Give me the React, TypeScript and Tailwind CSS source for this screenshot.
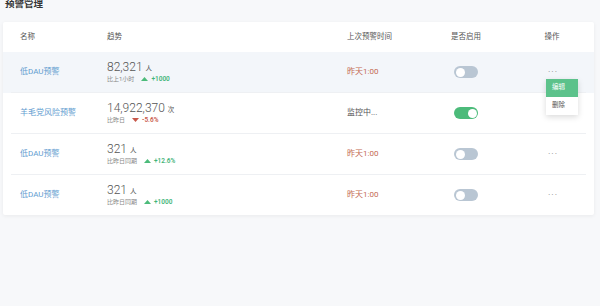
import { useState } from 'react';

type Row = {
    name: string;
    value: string;
    unit: string;
    compare: string;
    up: boolean;
    delta: string;
    last: string;
    lastWarn: boolean;
    enabled: boolean;
};

const rows: Row[] = [
    { name: '低DAU预警', value: '82,321', unit: '人', compare: '比上1小时', up: true, delta: '+1000', last: '昨天1:00', lastWarn: true, enabled: false },
    { name: '羊毛党风险预警', value: '14,922,370', unit: '次', compare: '比昨日', up: false, delta: '-5.6%', last: '监控中...', lastWarn: false, enabled: true },
    { name: '低DAU预警', value: '321', unit: '人', compare: '比昨日同期', up: true, delta: '+12.6%', last: '昨天1:00', lastWarn: true, enabled: false },
    { name: '低DAU预警', value: '321', unit: '人', compare: '比昨日同期', up: true, delta: '+1000', last: '昨天1:00', lastWarn: true, enabled: false },
];

const Toggle = ({ on }: { on: boolean }) => (
    <span
        className={`inline-flex h-[12px] w-[24px] items-center rounded-full px-[1.5px] ${
            on ? 'justify-end bg-[#4cbb7a]' : 'justify-start bg-[#b9c6d3]'
        }`}
    >
        <span className="h-[9px] w-[9px] rounded-full bg-white" />
    </span>
);

const Trend = ({ up }: { up: boolean }) => (
    <svg width="7" height="4" viewBox="0 0 7 4" className="ml-[7px] mr-[3px]">
        {up ? <polygon points="3.5,0 7,4 0,4" fill="#4cbb7a" /> : <polygon points="0,0 7,0 3.5,4" fill="#c8584a" />}
    </svg>
);

const App = () => {
    const [openRow] = useState(0);

    return (
        <div
            className="h-[306px] w-[600px] overflow-hidden bg-[#f7f8fa] px-[3px]"
            style={{ fontFamily: 'Roboto, "Noto Sans CJK SC", sans-serif' }}
        >
            <h1 className="-mt-[2px] h-[24px] pl-[2px] text-[9.5px] font-bold leading-[12px] text-[#333]">预警管理</h1>

            <div className="w-[591px] rounded-[2px] bg-white shadow-[0_1px_4px_rgba(0,0,0,0.06)]">
                <div className="grid h-[30px] grid-cols-[87px_240px_79px_80px_1fr] items-center pl-[17px] text-[7.5px] text-[#555]">
                    <span>名称</span>
                    <span>趋势</span>
                    <span>上次预警时间</span>
                    <span className="text-center">是否启用</span>
                    <span className="pl-[4px] text-center">操作</span>
                </div>

                {rows.map((r, i) => (
                    <div key={i} className={i === 0 ? 'bg-[#f3f6fa]' : ''}>
                        <div className="grid h-[40px] grid-cols-[87px_240px_79px_80px_1fr] items-center pl-[17px]">
                            <span className="text-[8px] text-[#5f9ccf]">{r.name}</span>
                            <div className="flex flex-col">
                                <div className="flex items-baseline text-[#555]">
                                    <span className="text-[12px] font-light leading-[13px]">{r.value}</span>
                                    <span className="ml-[3px] text-[6.5px]">{r.unit}</span>
                                </div>
                                <div className="mt-[1px] flex items-center text-[6px] leading-[8px]">
                                    <span className="text-[#888]">{r.compare}</span>
                                    <Trend up={r.up} />
                                    <span className={`text-[6.5px] font-semibold ${r.up ? 'text-[#3fb478]' : 'text-[#c8584a]'}`}>{r.delta}</span>
                                </div>
                            </div>
                            <span className={`text-[8px] ${r.lastWarn ? 'text-[#c46a52]' : 'text-[#555]'}`}>{r.last}</span>
                            <div className="flex justify-center">
                                <Toggle on={r.enabled} />
                            </div>
                            <div className="relative flex justify-center pl-[6px]">
                                {i !== 1 && <span className="text-[9px] leading-[8px] tracking-[1px] text-[#888]">···</span>}
                                {i === openRow && (
                                    <div className="absolute left-[40px] top-[11px] z-10 w-[32px] bg-white text-[6.5px] shadow-[0_2px_6px_rgba(0,0,0,0.15)]">
                                        <div className="flex h-[18px] items-center pl-[6px] text-white bg-[#5cc28b]">编辑</div>
                                        <div className="flex h-[18px] items-center pl-[6px] text-[#555]">删除</div>
                                    </div>
                                )}
                            </div>
                        </div>
                        {i < rows.length - 1 && <div className="mx-[8px] h-px bg-[#eef0f3]" />}
                    </div>
                ))}
            </div>
        </div>
    );
};

export default App;
